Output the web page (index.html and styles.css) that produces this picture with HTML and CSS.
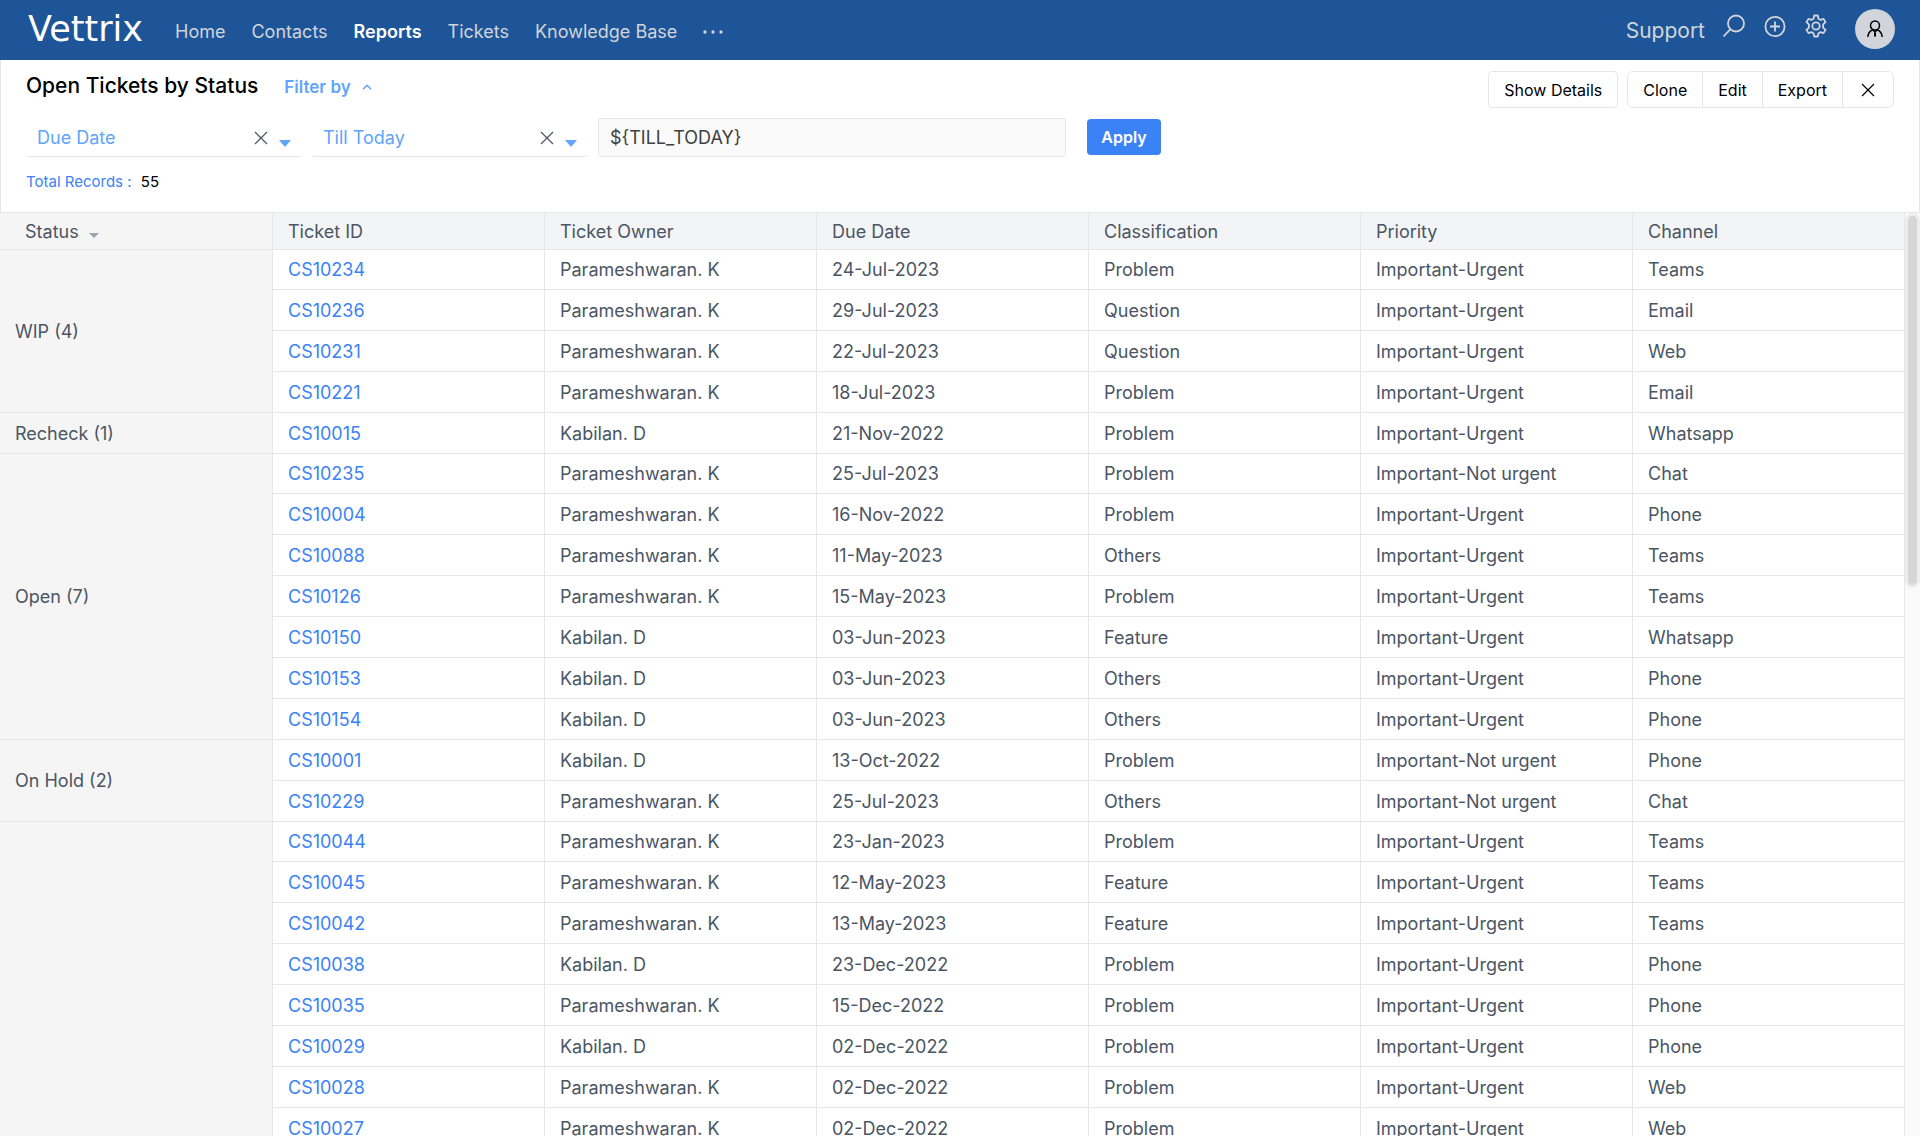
FILE: index.html
```html
<!DOCTYPE html>
<html lang="en">
<head>
<meta charset="utf-8">
<title>Open Tickets by Status</title>
<link rel="stylesheet" href="styles.css">
</head>
<body>
<header class="topbar">
  <a class="logo" href="#">Vettrix</a>
  <nav class="nav">
    <a href="#">Home</a>
    <a href="#">Contacts</a>
    <a href="#" class="active">Reports</a>
    <a href="#">Tickets</a>
    <a href="#">Knowledge Base</a>
    <button class="more" aria-label="More"><svg width="20" height="4" viewBox="0 0 20 4" fill="currentColor"><circle cx="2" cy="2" r="1.700"/><circle cx="10" cy="2" r="1.700"/><circle cx="18" cy="2" r="1.700"/></svg></button>
  </nav>
  <div class="tools">
    <span class="workspace">Support</span>
    <div class="icons">
      <button aria-label="Search"><svg width="24" height="24" viewBox="0 0 24 24" fill="none" stroke="currentColor" stroke-width="1.800"><circle cx="14" cy="9.500" r="8"/><path d="M8.500 15.200 1.500 22.500"/></svg></button>
      <button aria-label="Add"><svg width="24" height="24" viewBox="0 0 24 24" fill="none" stroke="currentColor" stroke-width="1.800"><circle cx="12" cy="12.500" r="9.600"/><path d="M12 7.500v10M7 12.500h10"/></svg></button>
      <button aria-label="Settings"><svg width="24" height="24" viewBox="0 0 24 24" fill="none" stroke="currentColor" stroke-width="1.800" stroke-linejoin="round"><circle cx="12" cy="12" r="3.700"/><path d="M10.200 1.500h3.600l.7 3.300 2 1.100 3.100-1 1.900 3.200-2.400 2.200v3.400l2.400 2.200-1.900 3.200-3.100-1-2 1.100-.7 3.300h-3.600l-.7-3.300-2-1.100-3.100 1-1.900-3.200 2.400-2.200v-3.400l-2.400-2.200 1.900-3.200 3.100 1 2-1.100z"/></svg></button>
    </div>
    <button class="avatar" aria-label="Account"><svg width="18" height="18" viewBox="0 0 18 18" fill="none" stroke="currentColor" stroke-width="1.500"><circle cx="9" cy="5.500" r="4.500"/><path d="M1.800 17c.3-4 2.500-6.200 5-7.200M16.200 17c-.3-4-2.500-6.200-5-7.200"/><path d="M9 12.500v4" stroke-width="2"/><path d="M6.500 9.500 9 12l2.500-2.500"/></svg></button>
  </div>
</header>

<section class="report">
  <div class="report-head">
    <h1>Open Tickets by Status</h1>
    <button class="filter-toggle">Filter by <svg width="10" height="6" viewBox="0 0 10 6" fill="none" stroke="currentColor" stroke-width="1.500"><path d="M1 5.200 5 1.200l4 4"/></svg></button>
    <div class="actions">
      <button class="details">Show Details</button>
      <div class="group">
        <button>Clone</button>
        <button>Edit</button>
        <button>Export</button>
        <button class="close" aria-label="Close"><svg width="14" height="14" viewBox="0 0 14 14" stroke="currentColor" stroke-width="1.200"><path d="M1 1l12 12M13 1 1 13"/></svg></button>
      </div>
    </div>
  </div>
  <form class="filters">
    <div class="picker">
      <select aria-label="Filter field"><option>Due Date</option></select>
      <button type="button" class="clear" aria-label="Clear field"><svg width="14" height="14" viewBox="0 0 14 14" stroke="currentColor" stroke-width="1.200"><path d="M1 1l12 12M13 1 1 13"/></svg></button>
      <svg class="caret" width="12" height="7" viewBox="0 0 12 7" fill="currentColor"><path d="M0 0h12L6 7z"/></svg>
    </div>
    <div class="picker">
      <select aria-label="Filter condition"><option>Till Today</option></select>
      <button type="button" class="clear" aria-label="Clear condition"><svg width="14" height="14" viewBox="0 0 14 14" stroke="currentColor" stroke-width="1.200"><path d="M1 1l12 12M13 1 1 13"/></svg></button>
      <svg class="caret" width="12" height="7" viewBox="0 0 12 7" fill="currentColor"><path d="M0 0h12L6 7z"/></svg>
    </div>
    <input class="value" type="text" aria-label="Filter value" value="${TILL_TODAY}">
    <button type="button" class="apply">Apply</button>
  </form>
  <p class="total"><span>Total Records :</span> 55</p>
</section>

<main class="grid">
  <div class="table-area">
    <table>
      <colgroup><col class="status-col"><col span="6"></colgroup>
      <thead>
        <tr><th class="sort">Status <svg width="10" height="5" viewBox="0 0 10 5" fill="#9ca3af"><path d="M0 0h10L5 5z"/></svg></th><th>Ticket ID</th><th>Ticket Owner</th><th>Due Date</th><th>Classification</th><th>Priority</th><th>Channel</th></tr>
      </thead>
      <tbody>
        <tr class="lead"><th rowspan="4">WIP (4)</th><td><a href="#">CS10234</a></td><td>Parameshwaran. K</td><td>24-Jul-2023</td><td>Problem</td><td>Important-Urgent</td><td>Teams</td></tr>
        <tr><td><a href="#">CS10236</a></td><td>Parameshwaran. K</td><td>29-Jul-2023</td><td>Question</td><td>Important-Urgent</td><td>Email</td></tr>
        <tr><td><a href="#">CS10231</a></td><td>Parameshwaran. K</td><td>22-Jul-2023</td><td>Question</td><td>Important-Urgent</td><td>Web</td></tr>
        <tr><td><a href="#">CS10221</a></td><td>Parameshwaran. K</td><td>18-Jul-2023</td><td>Problem</td><td>Important-Urgent</td><td>Email</td></tr>
      </tbody>
      <tbody>
        <tr><th>Recheck (1)</th><td><a href="#">CS10015</a></td><td>Kabilan. D</td><td>21-Nov-2022</td><td>Problem</td><td>Important-Urgent</td><td>Whatsapp</td></tr>
      </tbody>
      <tbody>
        <tr class="lead"><th rowspan="7">Open (7)</th><td><a href="#">CS10235</a></td><td>Parameshwaran. K</td><td>25-Jul-2023</td><td>Problem</td><td>Important-Not urgent</td><td>Chat</td></tr>
        <tr><td><a href="#">CS10004</a></td><td>Parameshwaran. K</td><td>16-Nov-2022</td><td>Problem</td><td>Important-Urgent</td><td>Phone</td></tr>
        <tr><td><a href="#">CS10088</a></td><td>Parameshwaran. K</td><td>11-May-2023</td><td>Others</td><td>Important-Urgent</td><td>Teams</td></tr>
        <tr><td><a href="#">CS10126</a></td><td>Parameshwaran. K</td><td>15-May-2023</td><td>Problem</td><td>Important-Urgent</td><td>Teams</td></tr>
        <tr><td><a href="#">CS10150</a></td><td>Kabilan. D</td><td>03-Jun-2023</td><td>Feature</td><td>Important-Urgent</td><td>Whatsapp</td></tr>
        <tr><td><a href="#">CS10153</a></td><td>Kabilan. D</td><td>03-Jun-2023</td><td>Others</td><td>Important-Urgent</td><td>Phone</td></tr>
        <tr><td><a href="#">CS10154</a></td><td>Kabilan. D</td><td>03-Jun-2023</td><td>Others</td><td>Important-Urgent</td><td>Phone</td></tr>
      </tbody>
      <tbody>
        <tr><th rowspan="2">On Hold (2)</th><td><a href="#">CS10001</a></td><td>Kabilan. D</td><td>13-Oct-2022</td><td>Problem</td><td>Important-Not urgent</td><td>Phone</td></tr>
        <tr><td><a href="#">CS10229</a></td><td>Parameshwaran. K</td><td>25-Jul-2023</td><td>Others</td><td>Important-Not urgent</td><td>Chat</td></tr>
      </tbody>
      <tbody>
        <tr class="lead"><th rowspan="8"></th><td><a href="#">CS10044</a></td><td>Parameshwaran. K</td><td>23-Jan-2023</td><td>Problem</td><td>Important-Urgent</td><td>Teams</td></tr>
        <tr><td><a href="#">CS10045</a></td><td>Parameshwaran. K</td><td>12-May-2023</td><td>Feature</td><td>Important-Urgent</td><td>Teams</td></tr>
        <tr><td><a href="#">CS10042</a></td><td>Parameshwaran. K</td><td>13-May-2023</td><td>Feature</td><td>Important-Urgent</td><td>Teams</td></tr>
        <tr><td><a href="#">CS10038</a></td><td>Kabilan. D</td><td>23-Dec-2022</td><td>Problem</td><td>Important-Urgent</td><td>Phone</td></tr>
        <tr><td><a href="#">CS10035</a></td><td>Parameshwaran. K</td><td>15-Dec-2022</td><td>Problem</td><td>Important-Urgent</td><td>Phone</td></tr>
        <tr><td><a href="#">CS10029</a></td><td>Kabilan. D</td><td>02-Dec-2022</td><td>Problem</td><td>Important-Urgent</td><td>Phone</td></tr>
        <tr><td><a href="#">CS10028</a></td><td>Parameshwaran. K</td><td>02-Dec-2022</td><td>Problem</td><td>Important-Urgent</td><td>Web</td></tr>
        <tr><td><a href="#">CS10027</a></td><td>Parameshwaran. K</td><td>02-Dec-2022</td><td>Problem</td><td>Important-Urgent</td><td>Web</td></tr>
      </tbody>
    </table>
  </div>
  <div class="track"><div class="thumb"></div></div>
</main>
</body>
</html>
```
FILE: styles.css
```css
* { box-sizing: border-box; }

body {
  margin: 0;
  height: 100vh;
  display: flex;
  flex-direction: column;
  overflow: hidden;
  font-family: Inter, "Liberation Sans", sans-serif;
  font-size: 18px;
  color: #000;
  background: #fff;
}

button, input, select { font: inherit; color: inherit; }
button { padding: 0; border: 0; background: none; cursor: pointer; }
a { text-decoration: none; color: inherit; }
svg { display: block; }

/* Top bar */
.topbar {
  flex: none;
  display: flex;
  align-items: center;
  height: 60px;
  padding: 0 25px 0 28px;
  background: #1e5598;
  color: #d1d5db;
}
.logo {
  width: 147px;
  padding-bottom: 2px;
  font-family: "DejaVu Sans", sans-serif;
  font-size: 35px;
  line-height: 40px;
  color: #fff;
}
.nav {
  display: flex;
  align-items: center;
  gap: 26px;
  padding-top: 3px;
}
.nav .active { font-weight: 600; color: #fff; }
.tools {
  display: flex;
  align-items: center;
  margin-left: auto;
}
.workspace { font-size: 21px; }
.icons {
  display: flex;
  gap: 17px;
  margin: 0 27px 8px 17px;
}
.avatar {
  display: grid;
  place-items: center;
  width: 40px;
  height: 40px;
  margin-bottom: 2px;
  border-radius: 50%;
  background: #d1d5db;
  color: #000;
}

/* Report heading and filters */
.report {
  flex: none;
  padding: 11px 25px 18px;
  border: 1px solid #e5e7eb;
  border-top: 0;
}
.report-head { display: flex; align-items: flex-start; }
h1 {
  margin: 0;
  font-size: 21px;
  line-height: 30px;
  font-weight: 500;
}
.filter-toggle {
  display: flex;
  align-items: center;
  gap: 11px;
  margin-left: 26px;
  font-size: 17px;
  line-height: 32px;
  font-weight: 600;
  color: #60a5fa;
}
.actions {
  display: flex;
  gap: 9px;
  margin-left: auto;
  font-size: 16px;
}
.actions button { height: 35px; padding: 0 15px; }
.details, .group { border: 1px solid #e5e7eb; }
.details { border-radius: 4px; }
.actions .details { height: 37px; }
.group { display: flex; border-radius: 6px; }
.group button + button { border-left: 1px solid #e5e7eb; }
.group .close { padding: 0 18px; }

.filters {
  display: flex;
  align-items: flex-start;
  margin: 10px 0 0;
}
.picker {
  position: relative;
  flex: 0 1 276px;
  margin-right: 10px;
  color: #60a5fa;
}
.picker select {
  display: block;
  width: 100%;
  height: 39px;
  padding: 0 60px 0 11px;
  border: 0;
  border-bottom: 1px solid #e5e7eb;
  border-radius: 3px;
  background: none;
  appearance: none;
}
.clear {
  position: absolute;
  top: 13px;
  right: 34px;
  color: #4b5563;
}
.caret {
  position: absolute;
  top: 22px;
  right: 11px;
}
.value {
  flex: 0 1 468px;
  min-width: 0;
  height: 39px;
  padding: 0 11px;
  border: 1px solid #e5e7eb;
  border-radius: 3px;
  background: #fafafa;
  color: #404040;
}
.apply {
  width: 74px;
  height: 36px;
  margin: 1px 0 0 21px;
  border-radius: 4px;
  background: #3b82f6;
  color: #fff;
  font-size: 16px;
  font-weight: 600;
}
.total {
  margin: 12px 0 0;
  font-size: 15px;
  line-height: 25px;
}
.total span { margin-right: 5px; color: #3b82f6; }

/* Ticket table */
.grid {
  flex: 1;
  min-height: 0;
  display: flex;
}
.table-area { flex: 1; overflow: hidden; }
table {
  width: 100%;
  table-layout: fixed;
  border-collapse: separate;
  border-spacing: 0;
  color: #4b5563;
}
.status-col { width: 273px; }
th, td {
  height: 41px;
  padding: 0 15px;
  border: solid #e5e7eb;
  border-width: 0 1px 1px 0;
  font-weight: 400;
  text-align: left;
  white-space: nowrap;
}
.lead td { height: 40px; }
thead th { height: 37px; background: #f3f4f6; }
tbody th, thead .sort { background: #f5f5f5; }
thead .sort { padding-left: 25px; }
.sort svg { display: inline-block; margin-left: 5px; }
td a { color: #3b82f6; }

.track {
  width: 15px;
  background: #fafafa;
}
.thumb {
  width: 15px;
  height: 33%;
  min-height: 375px;
  border: 3px solid #eee;
  border-radius: 8px;
  background: #d6d6d6;
}
```
